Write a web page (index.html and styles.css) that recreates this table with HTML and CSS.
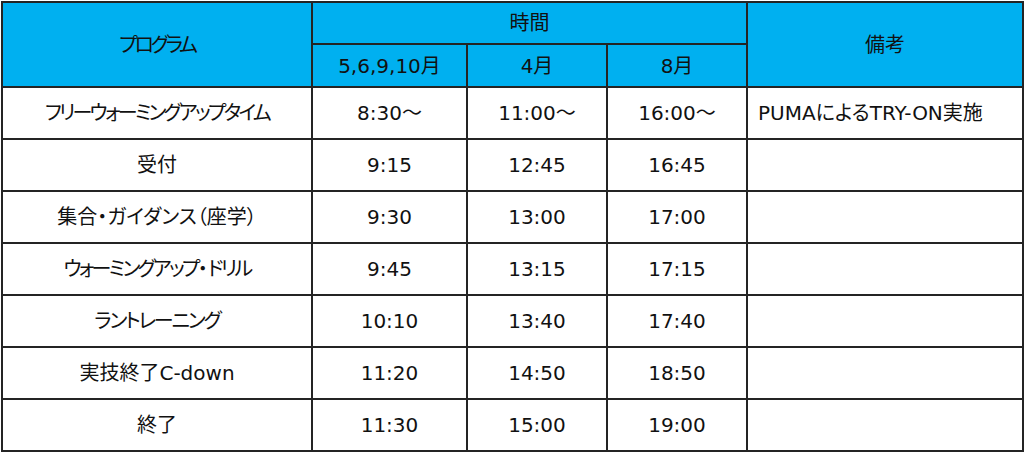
FILE: index.html
```html
<!DOCTYPE html>
<html lang="ja">
<head>
<meta charset="utf-8">
<link rel="stylesheet" href="styles.css">
</head>
<body>
<table class="schedule">
  <colgroup>
    <col class="c-prog">
    <col class="c-time1">
    <col class="c-time2">
    <col class="c-time3">
    <col class="c-note">
  </colgroup>
  <thead>
    <tr class="hr1">
      <th rowspan="2"><span class="kana kana-h">プログラム</span></th>
      <th colspan="3">時間</th>
      <th rowspan="2">備考</th>
    </tr>
    <tr class="hr2">
      <th>5,6,9,10月</th>
      <th>4月</th>
      <th>8月</th>
    </tr>
  </thead>
  <tbody>
    <tr><td><span class="kana">フリーウォーミングアップタイム</span></td><td>8:30～</td><td>11:00～</td><td>16:00～</td><td class="note">PUMAによるTRY-ON実施</td></tr>
    <tr><td>受付</td><td>9:15</td><td>12:45</td><td>16:45</td><td class="note"></td></tr>
    <tr><td>集合・ガイダンス（座学）</td><td>9:30</td><td>13:00</td><td>17:00</td><td class="note"></td></tr>
    <tr><td><span class="kana">ウォーミングアップ</span>・<span class="kana">ドリル</span></td><td>9:45</td><td>13:15</td><td>17:15</td><td class="note"></td></tr>
    <tr><td><span class="kana kana-l">ラントレーニング</span></td><td>10:10</td><td>13:40</td><td>17:40</td><td class="note"></td></tr>
    <tr><td>実技終了C-down</td><td>11:20</td><td>14:50</td><td>18:50</td><td class="note"></td></tr>
    <tr><td>終了</td><td>11:30</td><td>15:00</td><td>19:00</td><td class="note"></td></tr>
  </tbody>
</table>
</body>
</html>
```

FILE: styles.css
```css
html, body {
  margin: 0;
  padding: 0;
  background: #ffffff;
}
body {
  padding: 1px 0 0 1px;
  font-family: "DejaVu Sans", "Noto Sans CJK JP", sans-serif;
  font-size: 20px;
  color: #111111;
  font-feature-settings: "palt";
}
.schedule {
  border-collapse: collapse;
  table-layout: fixed;
  width: 1021px;
}
.c-prog { width: 310px; }
.c-time1 { width: 155px; }
.c-time2 { width: 140px; }
.c-time3 { width: 140px; }
.c-note { width: 276px; }
.schedule th,
.schedule td {
  border: 2px solid #242424;
  padding: 0;
  text-align: center;
  vertical-align: middle;
  font-weight: normal;
  white-space: nowrap;
  line-height: 1.2;
}
.schedule th {
  background: #00b0f0;
}
.hr1 { height: 42px; }
.hr2 { height: 43px; }
.schedule tbody tr { height: 52px; }
.schedule td.note {
  text-align: left;
  padding-left: 10px;
}
.kana {
  letter-spacing: -2.7px;
}
.kana-h {
  letter-spacing: -3.2px;
}
.kana-l {
  letter-spacing: -2.1px;
}
```
